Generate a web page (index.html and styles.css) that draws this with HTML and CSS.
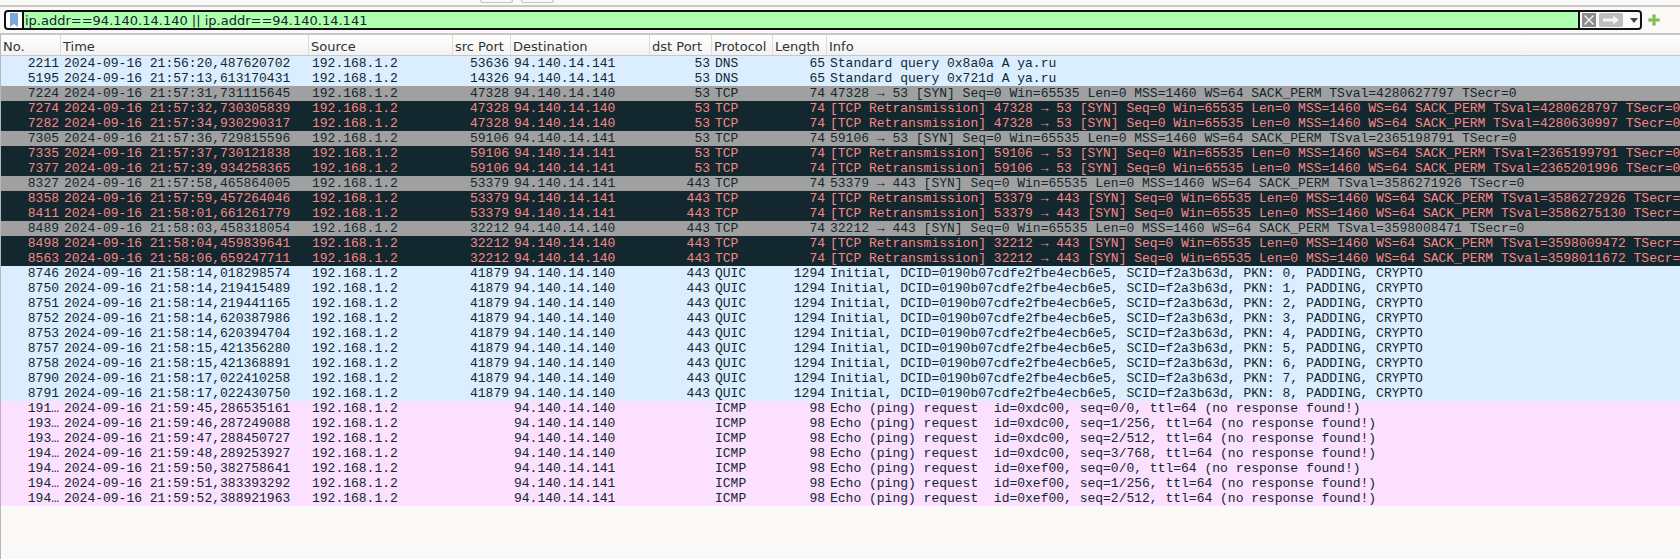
FILE: index.html
```html
<!DOCTYPE html>
<html lang="en">
<head>
  <meta charset="UTF-8">
  <title>Wireshark</title>
  <link rel="stylesheet" href="styles.css">
</head>
<body>
  <div class="toolbar">
    <span class="tool-btn first"></span>
    <span class="tool-btn"></span>
  </div>

  <div class="filter-bar">
    <div class="filter-box">
      <div class="bookmark">
        <svg width="8" height="14" viewBox="0 0 8 14"><path d="M0 0H8V14L4 11L0 14Z" fill="#7ba7dc"/></svg>
      </div>
      <div class="filter-text">ip.addr==94.140.14.140 || ip.addr==94.140.14.141</div>
      <div class="filter-actions">
        <svg class="clear-btn" width="14" height="14" viewBox="0 0 14 14"><rect width="14" height="14" rx="1" fill="#8c8c8c"/><path d="M2.5 2.5L11.5 11.5M11.5 2.5L2.5 11.5" stroke="#f4f4f4" stroke-width="1.4"/></svg>
        <svg class="apply-btn" width="24" height="14" viewBox="0 0 24 14"><rect width="24" height="14" rx="2" fill="#bdbdbd"/><path d="M4 5.5H14V2.5L20 7L14 11.5V8.5H4Z" fill="#f4f4f4"/></svg>
        <svg class="drop-btn" width="8" height="5" viewBox="0 0 8 5"><path d="M0 0H8L4 5Z" fill="#444"/></svg>
      </div>
    </div>
    <svg class="add-btn" width="12" height="12" viewBox="0 0 12 12"><path d="M4.5 0.5H7.5V4.5H11.5V7.5H7.5V11.5H4.5V7.5H0.5V4.5H4.5Z" fill="#84bb56" stroke="#b4d795" stroke-width="1"/></svg>
  </div>

  <div class="packet-list">
    <div class="row header">
      <div>No.</div><div>Time</div><div>Source</div><div>src Port</div><div>Destination</div><div>dst Port</div><div>Protocol</div><div>Length</div><div>Info</div>
    </div>

    <div class="row udp"><div class="r">2211</div><div>2024-09-16 21:56:20,487620702</div><div>192.168.1.2</div><div class="r">53636</div><div>94.140.14.141</div><div class="r">53</div><div>DNS</div><div class="r">65</div><div>Standard query 0x8a0a A ya.ru</div></div>
    <div class="row udp"><div class="r">5195</div><div>2024-09-16 21:57:13,613170431</div><div>192.168.1.2</div><div class="r">14326</div><div>94.140.14.141</div><div class="r">53</div><div>DNS</div><div class="r">65</div><div>Standard query 0x721d A ya.ru</div></div>
    <div class="row syn"><div class="r">7224</div><div>2024-09-16 21:57:31,731115645</div><div>192.168.1.2</div><div class="r">47328</div><div>94.140.14.140</div><div class="r">53</div><div>TCP</div><div class="r">74</div><div>47328 → 53 [SYN] Seq=0 Win=65535 Len=0 MSS=1460 WS=64 SACK_PERM TSval=4280627797 TSecr=0</div></div>
    <div class="row bad"><div class="r">7274</div><div>2024-09-16 21:57:32,730305839</div><div>192.168.1.2</div><div class="r">47328</div><div>94.140.14.140</div><div class="r">53</div><div>TCP</div><div class="r">74</div><div>[TCP Retransmission] 47328 → 53 [SYN] Seq=0 Win=65535 Len=0 MSS=1460 WS=64 SACK_PERM TSval=4280628797 TSecr=0</div></div>
    <div class="row bad"><div class="r">7282</div><div>2024-09-16 21:57:34,930290317</div><div>192.168.1.2</div><div class="r">47328</div><div>94.140.14.140</div><div class="r">53</div><div>TCP</div><div class="r">74</div><div>[TCP Retransmission] 47328 → 53 [SYN] Seq=0 Win=65535 Len=0 MSS=1460 WS=64 SACK_PERM TSval=4280630997 TSecr=0</div></div>
    <div class="row syn"><div class="r">7305</div><div>2024-09-16 21:57:36,729815596</div><div>192.168.1.2</div><div class="r">59106</div><div>94.140.14.141</div><div class="r">53</div><div>TCP</div><div class="r">74</div><div>59106 → 53 [SYN] Seq=0 Win=65535 Len=0 MSS=1460 WS=64 SACK_PERM TSval=2365198791 TSecr=0</div></div>
    <div class="row bad"><div class="r">7335</div><div>2024-09-16 21:57:37,730121838</div><div>192.168.1.2</div><div class="r">59106</div><div>94.140.14.141</div><div class="r">53</div><div>TCP</div><div class="r">74</div><div>[TCP Retransmission] 59106 → 53 [SYN] Seq=0 Win=65535 Len=0 MSS=1460 WS=64 SACK_PERM TSval=2365199791 TSecr=0</div></div>
    <div class="row bad"><div class="r">7377</div><div>2024-09-16 21:57:39,934258365</div><div>192.168.1.2</div><div class="r">59106</div><div>94.140.14.141</div><div class="r">53</div><div>TCP</div><div class="r">74</div><div>[TCP Retransmission] 59106 → 53 [SYN] Seq=0 Win=65535 Len=0 MSS=1460 WS=64 SACK_PERM TSval=2365201996 TSecr=0</div></div>
    <div class="row syn"><div class="r">8327</div><div>2024-09-16 21:57:58,465864005</div><div>192.168.1.2</div><div class="r">53379</div><div>94.140.14.141</div><div class="r">443</div><div>TCP</div><div class="r">74</div><div>53379 → 443 [SYN] Seq=0 Win=65535 Len=0 MSS=1460 WS=64 SACK_PERM TSval=3586271926 TSecr=0</div></div>
    <div class="row bad"><div class="r">8358</div><div>2024-09-16 21:57:59,457264046</div><div>192.168.1.2</div><div class="r">53379</div><div>94.140.14.141</div><div class="r">443</div><div>TCP</div><div class="r">74</div><div>[TCP Retransmission] 53379 → 443 [SYN] Seq=0 Win=65535 Len=0 MSS=1460 WS=64 SACK_PERM TSval=3586272926 TSecr=0</div></div>
    <div class="row bad"><div class="r">8411</div><div>2024-09-16 21:58:01,661261779</div><div>192.168.1.2</div><div class="r">53379</div><div>94.140.14.141</div><div class="r">443</div><div>TCP</div><div class="r">74</div><div>[TCP Retransmission] 53379 → 443 [SYN] Seq=0 Win=65535 Len=0 MSS=1460 WS=64 SACK_PERM TSval=3586275130 TSecr=0</div></div>
    <div class="row syn"><div class="r">8489</div><div>2024-09-16 21:58:03,458318054</div><div>192.168.1.2</div><div class="r">32212</div><div>94.140.14.140</div><div class="r">443</div><div>TCP</div><div class="r">74</div><div>32212 → 443 [SYN] Seq=0 Win=65535 Len=0 MSS=1460 WS=64 SACK_PERM TSval=3598008471 TSecr=0</div></div>
    <div class="row bad"><div class="r">8498</div><div>2024-09-16 21:58:04,459839641</div><div>192.168.1.2</div><div class="r">32212</div><div>94.140.14.140</div><div class="r">443</div><div>TCP</div><div class="r">74</div><div>[TCP Retransmission] 32212 → 443 [SYN] Seq=0 Win=65535 Len=0 MSS=1460 WS=64 SACK_PERM TSval=3598009472 TSecr=0</div></div>
    <div class="row bad"><div class="r">8563</div><div>2024-09-16 21:58:06,659247711</div><div>192.168.1.2</div><div class="r">32212</div><div>94.140.14.140</div><div class="r">443</div><div>TCP</div><div class="r">74</div><div>[TCP Retransmission] 32212 → 443 [SYN] Seq=0 Win=65535 Len=0 MSS=1460 WS=64 SACK_PERM TSval=3598011672 TSecr=0</div></div>

    <div class="row udp"><div class="r">8746</div><div>2024-09-16 21:58:14,018298574</div><div>192.168.1.2</div><div class="r">41879</div><div>94.140.14.140</div><div class="r">443</div><div>QUIC</div><div class="r">1294</div><div>Initial, DCID=0190b07cdfe2fbe4ecb6e5, SCID=f2a3b63d, PKN: 0, PADDING, CRYPTO</div></div>
    <div class="row udp"><div class="r">8750</div><div>2024-09-16 21:58:14,219415489</div><div>192.168.1.2</div><div class="r">41879</div><div>94.140.14.140</div><div class="r">443</div><div>QUIC</div><div class="r">1294</div><div>Initial, DCID=0190b07cdfe2fbe4ecb6e5, SCID=f2a3b63d, PKN: 1, PADDING, CRYPTO</div></div>
    <div class="row udp"><div class="r">8751</div><div>2024-09-16 21:58:14,219441165</div><div>192.168.1.2</div><div class="r">41879</div><div>94.140.14.140</div><div class="r">443</div><div>QUIC</div><div class="r">1294</div><div>Initial, DCID=0190b07cdfe2fbe4ecb6e5, SCID=f2a3b63d, PKN: 2, PADDING, CRYPTO</div></div>
    <div class="row udp"><div class="r">8752</div><div>2024-09-16 21:58:14,620387986</div><div>192.168.1.2</div><div class="r">41879</div><div>94.140.14.140</div><div class="r">443</div><div>QUIC</div><div class="r">1294</div><div>Initial, DCID=0190b07cdfe2fbe4ecb6e5, SCID=f2a3b63d, PKN: 3, PADDING, CRYPTO</div></div>
    <div class="row udp"><div class="r">8753</div><div>2024-09-16 21:58:14,620394704</div><div>192.168.1.2</div><div class="r">41879</div><div>94.140.14.140</div><div class="r">443</div><div>QUIC</div><div class="r">1294</div><div>Initial, DCID=0190b07cdfe2fbe4ecb6e5, SCID=f2a3b63d, PKN: 4, PADDING, CRYPTO</div></div>
    <div class="row udp"><div class="r">8757</div><div>2024-09-16 21:58:15,421356280</div><div>192.168.1.2</div><div class="r">41879</div><div>94.140.14.140</div><div class="r">443</div><div>QUIC</div><div class="r">1294</div><div>Initial, DCID=0190b07cdfe2fbe4ecb6e5, SCID=f2a3b63d, PKN: 5, PADDING, CRYPTO</div></div>
    <div class="row udp"><div class="r">8758</div><div>2024-09-16 21:58:15,421368891</div><div>192.168.1.2</div><div class="r">41879</div><div>94.140.14.140</div><div class="r">443</div><div>QUIC</div><div class="r">1294</div><div>Initial, DCID=0190b07cdfe2fbe4ecb6e5, SCID=f2a3b63d, PKN: 6, PADDING, CRYPTO</div></div>
    <div class="row udp"><div class="r">8790</div><div>2024-09-16 21:58:17,022410258</div><div>192.168.1.2</div><div class="r">41879</div><div>94.140.14.140</div><div class="r">443</div><div>QUIC</div><div class="r">1294</div><div>Initial, DCID=0190b07cdfe2fbe4ecb6e5, SCID=f2a3b63d, PKN: 7, PADDING, CRYPTO</div></div>
    <div class="row udp"><div class="r">8791</div><div>2024-09-16 21:58:17,022430750</div><div>192.168.1.2</div><div class="r">41879</div><div>94.140.14.140</div><div class="r">443</div><div>QUIC</div><div class="r">1294</div><div>Initial, DCID=0190b07cdfe2fbe4ecb6e5, SCID=f2a3b63d, PKN: 8, PADDING, CRYPTO</div></div>

    <div class="row icmp"><div class="r">191…</div><div>2024-09-16 21:59:45,286535161</div><div>192.168.1.2</div><div class="r"></div><div>94.140.14.140</div><div class="r"></div><div>ICMP</div><div class="r">98</div><div>Echo (ping) request  id=0xdc00, seq=0/0, ttl=64 (no response found!)</div></div>
    <div class="row icmp"><div class="r">193…</div><div>2024-09-16 21:59:46,287249088</div><div>192.168.1.2</div><div class="r"></div><div>94.140.14.140</div><div class="r"></div><div>ICMP</div><div class="r">98</div><div>Echo (ping) request  id=0xdc00, seq=1/256, ttl=64 (no response found!)</div></div>
    <div class="row icmp"><div class="r">193…</div><div>2024-09-16 21:59:47,288450727</div><div>192.168.1.2</div><div class="r"></div><div>94.140.14.140</div><div class="r"></div><div>ICMP</div><div class="r">98</div><div>Echo (ping) request  id=0xdc00, seq=2/512, ttl=64 (no response found!)</div></div>
    <div class="row icmp"><div class="r">194…</div><div>2024-09-16 21:59:48,289253927</div><div>192.168.1.2</div><div class="r"></div><div>94.140.14.140</div><div class="r"></div><div>ICMP</div><div class="r">98</div><div>Echo (ping) request  id=0xdc00, seq=3/768, ttl=64 (no response found!)</div></div>
    <div class="row icmp"><div class="r">194…</div><div>2024-09-16 21:59:50,382758641</div><div>192.168.1.2</div><div class="r"></div><div>94.140.14.141</div><div class="r"></div><div>ICMP</div><div class="r">98</div><div>Echo (ping) request  id=0xef00, seq=0/0, ttl=64 (no response found!)</div></div>
    <div class="row icmp"><div class="r">194…</div><div>2024-09-16 21:59:51,383393292</div><div>192.168.1.2</div><div class="r"></div><div>94.140.14.141</div><div class="r"></div><div>ICMP</div><div class="r">98</div><div>Echo (ping) request  id=0xef00, seq=1/256, ttl=64 (no response found!)</div></div>
    <div class="row icmp"><div class="r">194…</div><div>2024-09-16 21:59:52,388921963</div><div>192.168.1.2</div><div class="r"></div><div>94.140.14.141</div><div class="r"></div><div>ICMP</div><div class="r">98</div><div>Echo (ping) request  id=0xef00, seq=2/512, ttl=64 (no response found!)</div></div>
  </div>
</body>
</html>
```

FILE: styles.css
```css
html, body {
  margin: 0;
  padding: 0;
  height: 100%;
  overflow: hidden;
}

body {
  display: flex;
  flex-direction: column;
  background-color: #faf9f7;
  font-family: "DejaVu Sans", sans-serif;
  font-size: 13px;
  color: #2e3436;
}

/* only the bottom edge of the toolbar buttons is visible */
.toolbar {
  display: flex;
  gap: 8px;
  height: 5px;
  padding-left: 480px;
  border-bottom: 2px solid #c8c7c5;
  box-sizing: content-box;
}

.tool-btn {
  width: 31px;
  height: 2px;
  border: 1px solid #c4c3c1;
  border-top: none;
  border-radius: 0 0 3px 3px;
}

.filter-bar {
  display: flex;
  align-items: center;
  height: 26px;
  padding-left: 4px;
  border-bottom: 2px solid #c8c7c5;
}

.filter-box {
  display: flex;
  width: 1638px;
  height: 20px;
  box-sizing: border-box;
  border: 2px solid #111;
  border-radius: 4px;
  background-color: #fff;
}

.bookmark {
  width: 16px;
  display: flex;
  align-items: center;
  justify-content: center;
  border-right: 2px solid #111;
}

.filter-text {
  flex: 1;
  padding-left: 1px;
  line-height: 18px;
  background-color: #afffaf;
  color: #12272e;
  white-space: pre;
}

.filter-actions {
  display: flex;
  align-items: center;
  width: 58px;
  padding-left: 2px;
  border-left: 2px solid #111;
  background-color: #faf9f7;
  border-radius: 0 3px 3px 0;
}

.apply-btn {
  margin-left: 3px;
}

.drop-btn {
  margin-left: 7px;
}

.add-btn {
  margin-left: 6px;
}

.packet-list {
  flex: 1;
  border-left: 1px solid #b8b7b5;
}

.row {
  display: grid;
  grid-template-columns: 60px 248px 144px 58px 139px 62px 61px 54px 1fr;
  height: 15px;
  line-height: 15px;
  font-family: "Liberation Mono", monospace;
  font-size: 13px;
  white-space: pre;
}

.row > div {
  overflow: hidden;
  padding: 0 2px 0 3px;
}

.row .r {
  text-align: right;
}

.udp {
  background-color: #daeeff;
  color: #12272e;
}

.syn {
  background-color: #a0a0a0;
  color: #12272e;
}

.bad {
  background-color: #12272e;
  color: #f78787;
}

.icmp {
  background-color: #fce0ff;
  color: #12272e;
}

.row.header {
  height: 21px;
  box-sizing: border-box;
  line-height: 17px;
  font-family: "DejaVu Sans", sans-serif;
  color: #2e3436;
  background: linear-gradient(#ffffff, #f3f2f0);
  border-bottom: 1px solid #c8c7c5;
}

.row.header > div {
  padding: 3px 2px 0;
  border-right: 1px solid #dddcda;
}

.row.header > div:last-child {
  border-right: none;
}
```
